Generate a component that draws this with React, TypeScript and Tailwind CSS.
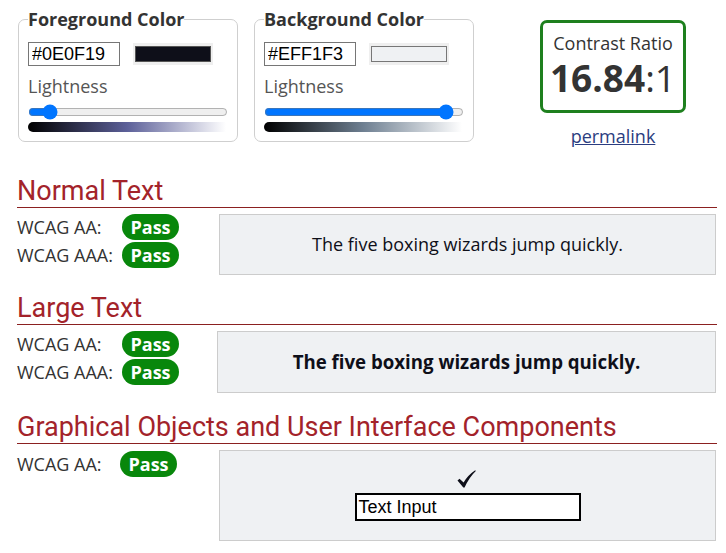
import React from "react";

const sans = { fontFamily: '"Open Sans", sans-serif' };

function ColorField({ title, hex, swatch, value, gradient, swatchBorder }: {
    title: string;
    hex: string;
    swatch: string;
    value: number;
    gradient: string;
    swatchBorder: string;
}) {
    return (
        <fieldset className="w-[220px] border border-[#cfcfcf] rounded-[7px] px-[9px] pb-[9px]">
            <legend className="text-[18px] font-bold text-[#333] leading-[24px]">{title}</legend>
            <div className="flex items-center mt-[11px] gap-[13px]">
                <input
                    readOnly
                    value={hex}
                    className="w-[92px] h-[24px] border border-[#767676] px-[3px] text-[18px] text-black font-['Liberation_Sans',Arial,sans-serif] outline-none"
                />
                <div className="w-[80px] h-[22px] bg-[#efefef] px-[2px] py-[3px]">
                    <div className={`w-full h-full border ${swatchBorder}`} style={{ backgroundColor: swatch }} />
                </div>
            </div>
            <div className="mt-[8px] text-[18px] leading-[24px] text-[#555]">Lightness</div>
            <input
                type="range"
                min={0}
                max={100}
                step={0.1}
                defaultValue={value}
                className="block w-[200px] h-[16px] m-0 mt-[6px] accent-[#0075ff]"
            />
            <div className="mt-[2px] w-[198px] h-[10px] rounded-l-md" style={{ background: gradient }} />
        </fieldset>
    );
}

function Badge() {
    return (
        <span className="inline-flex items-center justify-center w-[57px] h-[26px] rounded-full bg-[#08870b] text-white font-bold text-[18px] leading-none">
            Pass
        </span>
    );
}

function Row({ label }: { label: string }) {
    return (
        <div className="flex items-center h-[26px] mb-[2px]">
            <span className="w-[105px] text-[18px] leading-[24px] text-[#333]">{label}</span>
            <Badge />
        </div>
    );
}

function Heading({ children }: { children: React.ReactNode }) {
    return (
        <h2 className="font-['Roboto',sans-serif] text-[27px] leading-[32px] text-[#a3232a] border-b border-[#8b2020]">
            {children}
        </h2>
    );
}

function CheckMark() {
    return (
        <svg width="19" height="18" viewBox="0 0 19 18" className="block">
            <path d="M0.5 10.5 L2.5 8.8 L6.6 12.6 Q10.5 5.5 18.2 0.3 L18.8 1 Q12 7.5 7.6 17.5 L6.3 17.5 Z" fill="#0e0f19" />
        </svg>
    );
}

export default function App() {
    return (
        <main className="bg-white w-[726px] h-[553px] overflow-hidden pl-[17px] pr-[9px] pt-[7px]" style={sans}>
            <div className="flex items-start h-[136px]">
                <div className="ml-[1px] flex gap-[16px]">
                    <ColorField
                        title="Foreground Color"
                        hex="#0E0F19"
                        swatch="#0E0F19"
                        value={7.6}
                        gradient="linear-gradient(to right, #000, #5c6099 50%, #fff)"
                        swatchBorder="border-[#555]"
                    />
                    <ColorField
                        title="Background Color"
                        hex="#EFF1F3"
                        swatch="#EFF1F3"
                        value={94.3}
                        gradient="linear-gradient(to right, #000, #6e7f91 50%, #fff)"
                        swatchBorder="border-[#777]"
                    />
                </div>
                <div className="ml-[66px] mt-[13px] flex flex-col items-center">
                    <div className="w-[146px] h-[93px] border-[3px] border-[#1e801e] rounded-[7px] flex flex-col items-center pt-[8px]">
                        <div className="text-[18px] leading-[24px] text-[#333]">Contrast Ratio</div>
                        <div className="text-[37px] leading-[46px] text-[#333]">
                            <span className="font-bold">16.84</span>:1
                        </div>
                    </div>
                    <a href="#" className="mt-[11px] text-[18px] leading-[24px] text-[#2b3d80] underline">permalink</a>
                </div>
            </div>

            <section className="mt-[32px]">
                <Heading>Normal Text</Heading>
                <div className="flex mt-[6px]">
                    <div className="w-[202px]">
                        <Row label="WCAG AA:" />
                        <Row label="WCAG AAA:" />
                    </div>
                    <div className="flex-1 mr-[1px] h-[61px] border border-[#cccccc] bg-[#eff1f3] flex items-center justify-center text-[18px] text-[#0e0f19]">
                        The five boxing wizards jump quickly.
                    </div>
                </div>
            </section>

            <section className="mt-[17px]">
                <Heading>Large Text</Heading>
                <div className="flex mt-[6px]">
                    <div className="w-[200px]">
                        <Row label="WCAG AA:" />
                        <Row label="WCAG AAA:" />
                    </div>
                    <div className="flex-1 mr-[1px] h-[62px] border border-[#cccccc] bg-[#eff1f3] flex items-center justify-center text-[18.67px] font-bold text-[#0e0f19]">
                        The five boxing wizards jump quickly.
                    </div>
                </div>
            </section>

            <section className="mt-[18px]">
                <Heading>Graphical Objects and User Interface Components</Heading>
                <div className="flex mt-[6px]">
                    <div className="w-[202px]">
                        <div className="flex items-center h-[27px]">
                            <span className="w-[103px] text-[18px] leading-[24px] text-[#333]">WCAG AA:</span>
                            <Badge />
                        </div>
                    </div>
                    <div className="flex-1 mr-[1px] h-[91px] border border-[#cccccc] bg-[#eff1f3] flex flex-col items-center justify-center">
                        <div className="ml-[-3px]">
                            <CheckMark />
                        </div>
                        <div className="mt-[5px] w-[226px] h-[28px] border-2 border-black bg-white px-[2px] flex items-center text-[18px] text-black font-['Liberation_Sans',Arial,sans-serif]">
                            Text Input
                        </div>
                    </div>
                </div>
            </section>
        </main>
    );
}
